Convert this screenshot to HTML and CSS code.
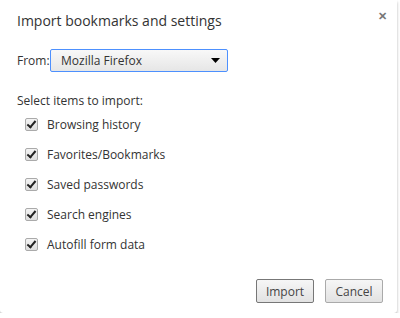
FILE: index.html
```html
<!DOCTYPE html>
<html lang="en">
<head>
    <meta charset="UTF-8">
    <title>Import bookmarks and settings</title>
    <link rel="stylesheet" href="styles.css">
</head>
<body>
    <div class="dialog">
        <div class="header">
            <h2>Import bookmarks and settings</h2>
            <span class="close">&#10005;</span>
        </div>

        <div class="from-row">
            <label for="browser">From:</label>
            <div class="select">
                <span>Mozilla Firefox</span>
                <svg width="9" height="5" viewBox="0 0 9 5"><path d="M0 0h9L4.5 5z" fill="#000"/></svg>
            </div>
        </div>

        <p class="section">Select items to import:</p>
        <ul class="items">
            <li><span class="check"></span>Browsing history</li>
            <li><span class="check"></span>Favorites/Bookmarks</li>
            <li><span class="check"></span>Saved passwords</li>
            <li><span class="check"></span>Search engines</li>
            <li><span class="check"></span>Autofill form data</li>
        </ul>

        <div class="buttons">
            <button class="btn focus">Import</button>
            <button class="btn">Cancel</button>
        </div>
    </div>
</body>
</html>
```

FILE: styles.css
```css
* {
    margin: 0;
    padding: 0;
    box-sizing: border-box;
}
body {
    background: #fff;
    font-family: "Open Sans", "Noto Sans", sans-serif;
    font-size: 12px;
    color: #333;
}
.dialog {
    width: 397px;
    height: 313px;
    background: #fff;
    border-radius: 0 0 3px 3px;
    box-shadow: 0 2px 3px rgba(0, 0, 0, 0.3);
    padding: 0 0 0 17px;
}
.header {
    display: flex;
    justify-content: space-between;
    height: 40px;
    padding-top: 11px;
}
.header h2 {
    font-size: 14px;
    font-weight: normal;
    color: #333;
}
.close {
    font-size: 11px;
    font-weight: bold;
    color: #777;
    margin-right: 10px;
    margin-top: -3px;
}
.from-row {
    display: flex;
    align-items: center;
    height: 23px;
    margin-top: 9px;
}
.from-row label {
    width: 33px;
}
.select {
    display: flex;
    align-items: center;
    justify-content: space-between;
    width: 178px;
    height: 23px;
    border: 1px solid #4d90fe;
    border-radius: 2px;
    background: linear-gradient(#f8f8f8, #e6e6e6);
    padding: 0 7px 0 10px;
    color: #333;
}
.section {
    margin-top: 20px;
}
.items {
    list-style: none;
    padding-left: 8px;
}
.items li {
    display: flex;
    align-items: center;
    height: 30px;
}
.check {
    width: 13px;
    height: 13px;
    border: 1px solid #aaa;
    border-radius: 2px;
    background: linear-gradient(#f4f4f4, #dedede);
    margin-right: 9px;
    position: relative;
}
.check::after {
    content: "";
    position: absolute;
    left: 3px;
    top: 0;
    width: 3px;
    height: 7px;
    border: solid #222;
    border-width: 0 2px 2px 0;
    transform: rotate(40deg);
}
.buttons {
    display: flex;
    justify-content: flex-end;
    gap: 11px;
    margin-top: 20px;
    padding-right: 14px;
}
.btn {
    width: 58px;
    height: 24px;
    font-family: inherit;
    font-size: 12px;
    color: #444;
    border: 1px solid #aaa;
    border-radius: 2px;
    background: linear-gradient(#f6f6f6, #e2e2e2);
}
.btn.focus {
    border-color: #777;
}
```
